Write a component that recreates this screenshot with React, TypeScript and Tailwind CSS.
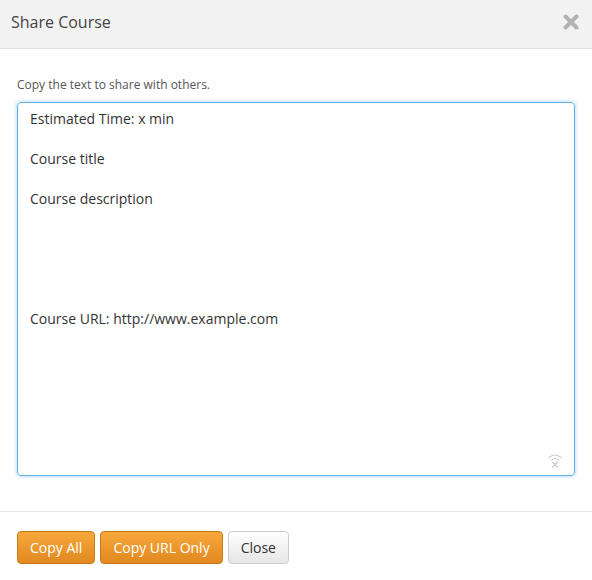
import { useState } from "react";

const initialText =
  "Estimated Time: x min\n\nCourse title\n\nCourse description\n\n\n\n\n\nCourse URL: http://www.example.com";

const GripIcon = () => (
  <svg width="16" height="16" viewBox="0 0 16 16" fill="none" stroke="#c8c8c8" strokeWidth="1.1" strokeLinecap="round">
    <path d="M2 5.5 Q8 0.5 14 5.5" />
    <path d="M4.5 8 Q8 5 11.5 8" />
    <path d="M5.5 10 L10.5 15 M10.5 10 L5.5 15" />
  </svg>
);

export default function App() {
  const [text, setText] = useState(initialText);

  return (
    <div className="w-[592px] h-[580px] bg-white font-['Open_Sans',sans-serif] text-[#333]">
      <div className="h-[49px] bg-[#f2f2f2] border-b border-[#e1e1e1] flex items-center justify-between pl-[11px] pr-[13px] pb-[4px]">
        <span className="text-[16px] text-[#444]">Share Course</span>
        <svg width="16" height="16" viewBox="0 0 16 16">
          <path d="M2.5 2.5 L13.5 13.5 M13.5 2.5 L2.5 13.5" stroke="#b3b3b3" strokeWidth="4" strokeLinecap="round" />
        </svg>
      </div>

      <div className="px-[17px] pt-[28px] pb-[35px] border-b border-[#e5e5e5]">
        <p className="text-[12px] text-[#555] mb-[9px] leading-[16px]">Copy the text to share with others.</p>
        <div className="relative">
          <textarea
            value={text}
            onChange={(e) => setText(e.target.value)}
            className="block w-full h-[374px] resize-none rounded-[4px] border border-[#66afe9] shadow-[0_0_4px_rgba(102,175,233,0.6)] px-[12px] pt-[6px] text-[14px] leading-[20px] text-[#333] outline-none font-['Open_Sans',sans-serif]"
          />
          <div className="absolute right-[12px] bottom-[8px]">
            <GripIcon />
          </div>
        </div>
      </div>

      <div className="flex gap-[5px] px-[17px] pt-[19px]">
        <button className="h-[33px] px-[12px] rounded-[4px] border border-[#c9791a] bg-gradient-to-b from-[#f7a83b] to-[#e0891f] text-white text-[14px]">
          Copy All
        </button>
        <button className="h-[33px] px-[12px] rounded-[4px] border border-[#c9791a] bg-gradient-to-b from-[#f7a83b] to-[#e0891f] text-white text-[14px]">
          Copy URL Only
        </button>
        <button className="h-[33px] px-[12px] rounded-[4px] border border-[#ccc] bg-gradient-to-b from-white to-[#e6e6e6] text-[#333] text-[14px]">
          Close
        </button>
      </div>
    </div>
  );
}
